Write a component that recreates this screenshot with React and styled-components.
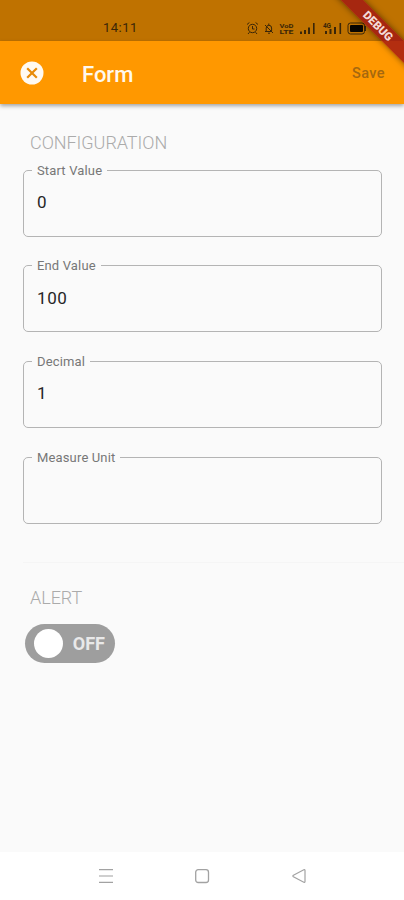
import { useState } from 'react';
import styled, { createGlobalStyle } from 'styled-components';

const GlobalStyle = createGlobalStyle`
  * {
    box-sizing: border-box;
  }

  body {
    margin: 0;
    font-family: Roboto, 'Liberation Sans', sans-serif;
    background: #fafafa;
  }
`;

const Screen = styled.div`
  position: relative;
  display: flex;
  flex-direction: column;
  width: 404px;
  height: 900px;
  overflow: hidden;
  background: #fafafa;
`;

const StatusBar = styled.div`
  display: flex;
  align-items: center;
  justify-content: space-between;
  flex-shrink: 0;
  height: 41px;
  padding: 14px 31px 0 103px;
  background: #bf7200;
  color: #3a2608;
`;

const Clock = styled.span`
  font-size: 13px;
  letter-spacing: 0.5px;
`;

const AppBar = styled.header`
  display: flex;
  align-items: center;
  flex-shrink: 0;
  z-index: 1;
  height: 63px;
  padding: 1px 19px 0 20px;
  background: #ff9800;
  box-shadow: 0 2px 4px rgba(0, 0, 0, 0.35);
`;

const IconButton = styled.button`
  display: flex;
  padding: 0;
  border: none;
  background: none;
  cursor: pointer;
`;

const Title = styled.h1`
  flex: 1;
  margin: 3px 0 0 38px;
  font-size: 22px;
  font-weight: 500;
  line-height: 26px;
  color: #fff8ee;
`;

const SaveButton = styled.button`
  padding: 0;
  border: none;
  background: none;
  font-family: inherit;
  font-size: 14.5px;
  font-weight: 500;
  letter-spacing: 0.4px;
  color: #a5680f;
`;

const Content = styled.main`
  display: flex;
  flex-direction: column;
  flex: 1;
  padding: 28px 0 0 23px;
`;

const SectionTitle = styled.h2`
  margin: 0 0 0 7px;
  font-size: 18px;
  font-weight: 300;
  line-height: 22px;
  letter-spacing: -0.05px;
  color: #ababab;
`;

const Fields = styled.div`
  display: flex;
  flex-direction: column;
  gap: 21.7px;
  width: 359px;
  margin-top: 8.5px;
`;

const Outline = styled.fieldset`
  height: 74px;
  min-width: 0;
  margin: 0;
  padding: 0 13px;
  border: 1px solid #b4b4b4;
  border-radius: 5px;
`;

const Label = styled.legend`
  height: 15px;
  margin-left: -5px;
  padding: 0 5px;
  font-size: 13px;
  line-height: 15px;
  letter-spacing: 0.15px;
  color: #777;
`;

const Input = styled.input`
  display: block;
  width: 100%;
  height: 49px;
  padding: 0;
  border: none;
  outline: none;
  background: none;
  font-family: inherit;
  font-size: 17px;
  letter-spacing: 0.6px;
  color: #262626;
`;

const Divider = styled.hr`
  width: 100%;
  height: 1px;
  margin: 38px 0 24.5px;
  border: none;
  background: #f5f5f5;
`;

const Toggle = styled.button`
  display: flex;
  flex-direction: ${({ $on }) => ($on ? 'row-reverse' : 'row')};
  align-items: center;
  justify-content: space-between;
  width: 90px;
  height: 39px;
  margin: 15px 0 0 2px;
  padding: 0 10px 0 9px;
  border: none;
  border-radius: 20px;
  background: ${({ $on }) => ($on ? '#ff9800' : '#9e9e9e')};
  font-family: inherit;
  font-size: 18px;
  font-weight: 700;
  color: #e9e9e9;
  cursor: pointer;
`;

const Knob = styled.span`
  width: 29px;
  height: 29px;
  border-radius: 50%;
  background: #fff;
`;

const NavBar = styled.nav`
  display: flex;
  justify-content: center;
  gap: 80.5px;
  flex-shrink: 0;
  height: 48px;
  padding-top: 16px;
  background: #fff;
`;

const Ribbon = styled.div`
  position: absolute;
  z-index: 2;
  top: 18px;
  right: -34px;
  width: 120px;
  height: 16px;
  transform: rotate(45deg);
  background: rgba(160, 20, 20, 0.8);
  box-shadow: 0 0 6px rgba(0, 0, 0, 0.5);
  font-size: 11.5px;
  font-weight: 900;
  line-height: 16px;
  text-align: center;
  color: #f4dcd8;
`;

const StatusIcons = () => (
  <svg width='128' height='16' viewBox='0 0 128 16' fill='none' stroke='currentColor'>
    <circle cx='7.5' cy='8.5' r='4.2' />
    <path d='M7.5 6v3h2M2 4.5l2.4-2M13 4.5l-2.4-2M4.5 12.2 3 14M10.5 12.2 12 14' />
    <path d='M20 11.5h7M21.2 11V8a2.7 2.7 0 0 1 5.4 0v3M23.8 5V3.5M23 13.2h2M20 5l8 8' />
    <g fill='currentColor' stroke='none' fontFamily='Roboto, sans-serif' fontWeight='700'>
      <text x='34.5' y='7.6' fontSize='5.4' textLength='14' lengthAdjust='spacingAndGlyphs'>
        VoD
      </text>
      <text x='34.5' y='14' fontSize='5.4' textLength='14' lengthAdjust='spacingAndGlyphs'>
        LTE
      </text>
      <text x='78' y='7.5' fontSize='6.5' textLength='8'>4G</text>
      <path d='M55 11.5h2V14h-2zM59 10h2v4h-2zM63 7.5h2V14h-2zM68 3h1.6v11H68z' />
      <path d='M80 11h2v3h-2zM84.5 9h2v5h-2zM89 7h2v7h-2zM94.5 3h1.6v11h-1.6z' />
      <path d='M119 6h2v5h-2z' />
      <rect x='105' y='5' width='13' height='7' rx='1' fill='#080500' />
    </g>
    <rect x='103' y='3' width='16.5' height='11' rx='2.5' />
  </svg>
);

const CloseIcon = () => (
  <svg width='24' height='24' viewBox='0 0 24 24'>
    <circle cx='12' cy='12' r='11.5' fill='#fffaf2' />
    <path d='m7.2 7.2 9.6 9.6M16.8 7.2l-9.6 9.6' stroke='#e88b08' strokeWidth='2.2' />
  </svg>
);

const FIELDS = [
  { name: 'start', label: 'Start Value', value: '0' },
  { name: 'end', label: 'End Value', value: '100' },
  { name: 'decimal', label: 'Decimal', value: '1' },
  { name: 'unit', label: 'Measure Unit', value: '' },
];

export default function App() {
  const [alertOn, setAlertOn] = useState(false);

  return (
    <>
      <GlobalStyle />
      <Screen>
        <StatusBar>
          <Clock>14:11</Clock>
          <StatusIcons />
        </StatusBar>
        <AppBar>
          <IconButton aria-label='Close'>
            <CloseIcon />
          </IconButton>
          <Title>Form</Title>
          <SaveButton>Save</SaveButton>
        </AppBar>
        <Content>
          <SectionTitle>CONFIGURATION</SectionTitle>
          <Fields>
            {FIELDS.map(({ name, label, value }) => (
              <Outline key={name}>
                <Label>{label}</Label>
                <Input name={name} aria-label={label} defaultValue={value} />
              </Outline>
            ))}
          </Fields>
          <Divider />
          <SectionTitle>ALERT</SectionTitle>
          <Toggle $on={alertOn} onClick={() => setAlertOn((prev) => !prev)}>
            <Knob />
            {alertOn ? 'ON' : 'OFF'}
          </Toggle>
        </Content>
        <NavBar>
          <svg width='16' height='16' fill='none' stroke='#a2a2a2' strokeWidth='1.3'>
            <path d='M1 1.7h14M1 14.3h14' />
            <path d='M1 8h14' stroke='#c4c4c4' strokeWidth='1.6' />
          </svg>
          <svg width='16' height='16' fill='none' stroke='#a2a2a2' strokeWidth='1.3'>
            <rect x='1.7' y='1.7' width='12.8' height='12.8' rx='2.5' />
          </svg>
          <svg width='16' height='16' fill='none' stroke='#a2a2a2' strokeWidth='1.2'>
            <path d='M2.4 7.3 12.8 1.8q1.2-.4 1.2.8v10.8q0 1.2-1.2.8L2.4 8.7q-1-.7 0-1.4z' />
          </svg>
        </NavBar>
        <Ribbon>DEBUG</Ribbon>
      </Screen>
    </>
  );
}
